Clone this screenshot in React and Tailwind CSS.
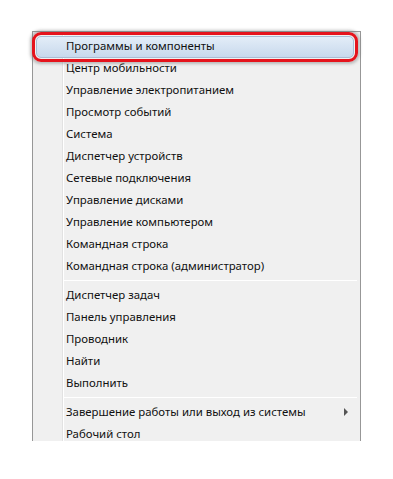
import React from "react";

const groups = [
  [
    "Программы и компоненты",
    "Центр мобильности",
    "Управление электропитанием",
    "Просмотр событий",
    "Система",
    "Диспетчер устройств",
    "Сетевые подключения",
    "Управление дисками",
    "Управление компьютером",
    "Командная строка",
    "Командная строка (администратор)",
  ],
  ["Диспетчер задач", "Панель управления", "Проводник", "Найти", "Выполнить"],
  ["Завершение работы или выход из системы", "Рабочий стол"],
];

function Item({ label, selected, submenu }) {
  return (
    <div className="relative h-[22px] flex items-center justify-between pl-[3px] pr-[12px]">
      {selected && (
        <div className="absolute left-[-31px] right-[2px] top-[-3px] bottom-[-5px] rounded-[9px] border-[3px] border-[#e5131c] shadow-[0_0_3px_2px_rgba(120,120,120,0.45)] p-[1px]">
          <div className="w-full h-full rounded-[5px] border border-[#a9bdd4] bg-gradient-to-b from-[#e3edf8] to-[#c8d9ec]" />
        </div>
      )}
      <span className="relative text-[11.4px] text-[#111] leading-none whitespace-nowrap">{label}</span>
      {submenu && (
        <span className="w-0 h-0 border-y-[4px] border-y-transparent border-l-[4px] border-l-[#555]" />
      )}
    </div>
  );
}

export default function App() {
  return (
    <div className="w-[393px] h-[479px] bg-white overflow-hidden pt-[31px] pl-[32px]" style={{ fontFamily: '"Noto Sans", "Open Sans", sans-serif' }}>
      <div className="w-[329px] h-[410px] bg-[#f0f0f0] border-x border-t border-[#979797] flex">
        <div className="w-[29px] shrink-0" />
        <div className="flex-1 border-l border-[#e2e2e2] pt-[3px] shadow-[inset_1px_0_0_#ffffff]">
          {groups.map((g, gi) => (
            <div key={gi}>
              {gi > 0 && (
                <div className="h-[7px] pl-[1px] pr-[3px] pt-[3px]">
                  <div className="h-[1px] bg-[#d7d7d7] border-b border-white" />
                </div>
              )}
              {g.map((label, i) => (
                <Item
                  key={label}
                  label={label}
                  selected={gi === 0 && i === 0}
                  submenu={gi === 2 && i === 0}
                />
              ))}
            </div>
          ))}
        </div>
      </div>
    </div>
  );
}
